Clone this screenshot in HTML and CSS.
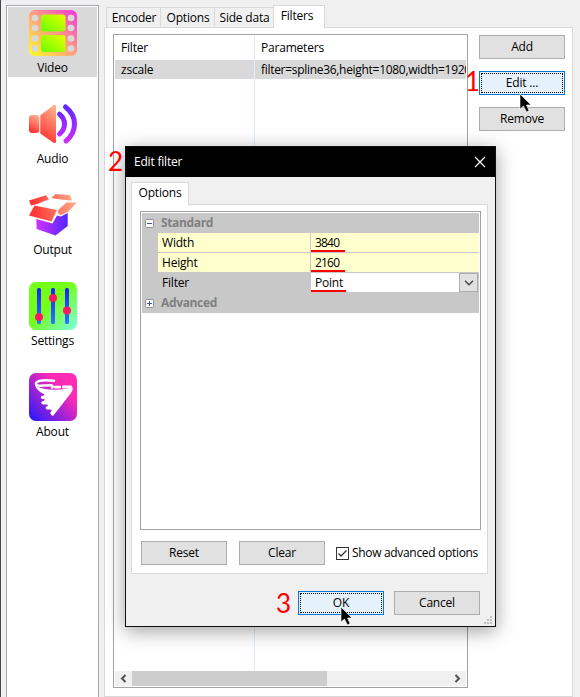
FILE: index.html
```html
<!DOCTYPE html>
<html lang="en">
<head>
<meta charset="utf-8">
<title>Edit filter</title>
<link rel="stylesheet" href="styles.css">
</head>
<body>
<div class="app">
  <nav class="sidebar">
    <div class="nav-item selected">
      <svg viewBox="0 0 48 48" width="48" height="48"><defs><linearGradient id="film" x1="0" y1="1" x2="1" y2="0"><stop stop-color="#ffff20"/><stop offset=".5" stop-color="#ffa080"/><stop offset="1" stop-color="#f535dc"/></linearGradient><linearGradient id="frame" x1="0" y1="1" x2="1" y2="0"><stop stop-color="#64ff00"/><stop offset="1" stop-color="#eaff00"/></linearGradient></defs>
        <rect y="1" width="48" height="46" rx="6" fill="url(#film)"/>
        <g fill="url(#frame)"><rect x="12" y="5.500" width="24.500" height="17" rx="3"/><rect x="12" y="26" width="24.500" height="17" rx="3"/></g>
        <g fill="#d9d9d9"><circle cx="6" cy="9" r="3.300"/><circle cx="6" cy="19" r="3.300"/><circle cx="6" cy="29.500" r="3.300"/><circle cx="6" cy="39.500" r="3.300"/><circle cx="42" cy="9" r="3.300"/><circle cx="42" cy="19" r="3.300"/><circle cx="42" cy="29.500" r="3.300"/><circle cx="42" cy="39.500" r="3.300"/></g>
      </svg>
      <span>Video</span>
    </div>
    <div class="nav-item">
      <svg viewBox="0 0 48 48" width="48" height="48"><defs><linearGradient id="horn" x1=".7" y1="0" x2=".4" y2="1"><stop stop-color="#ffb08c"/><stop offset="1" stop-color="#ff3030"/></linearGradient><linearGradient id="wave" gradientUnits="userSpaceOnUse" x1="35" y1="4" x2="35" y2="44"><stop stop-color="#5a28ff"/><stop offset="1" stop-color="#d52dff"/></linearGradient></defs>
        <rect y="15" width="10.300" height="18" rx="3" fill="url(#horn)"/>
        <path d="M11.300 15.200L24.500 5.200Q27 4 27 6.500V41.500Q27 44 24.500 42.800L11.300 33.500Z" fill="url(#horn)"/>
        <path d="M30.500 14.200Q35.500 18 35.500 24T30.500 34M36.500 7Q45.500 14 45.500 24T37 41" fill="none" stroke="url(#wave)" stroke-width="5" stroke-linecap="round"/>
      </svg>
      <span>Audio</span>
    </div>
    <div class="nav-item">
      <svg viewBox="0 0 48 48" width="48" height="48"><defs><linearGradient id="flap" gradientUnits="userSpaceOnUse" x1="0" y1="20" x2="48" y2="12"><stop offset=".1" stop-color="#ff3434"/><stop offset="1" stop-color="#ffb08c"/></linearGradient><linearGradient id="box"><stop stop-color="#cf32ff"/><stop offset="1" stop-color="#5127ff"/></linearGradient></defs>
        <path d="M7.300 28L23.500 32.500L28 24.500L32 25.500L38.700 22V35L26.500 44.500L7.700 38Z" fill="url(#box)"/>
        <g fill="url(#flap)"><path d="M0 9.500L17 4.300L20 8.300L7.500 13.200L2 14.500Z"/><path d="M22.500 7L26.500 3L41 4.300L43 9.500L36 9L25 7.500Z"/><path d="M5.500 14.500L28 19L22.500 30.500L0 24.500Z"/><path d="M37.500 11.500L48 11.500L39.500 20.500L31.500 24.300L28.500 21.500L30 18.200Z"/></g>
      </svg>
      <span>Output</span>
    </div>
    <div class="nav-item">
      <svg viewBox="0 0 48 48" width="48" height="48"><defs><linearGradient id="lime" x1="0" y1="0" x2="1" y2="1"><stop offset=".45" stop-color="#74ff18"/><stop offset="1" stop-color="#7affe0"/></linearGradient><linearGradient id="slot" x1="0" y1="0" x2="0" y2="1"><stop stop-color="#1824f0"/><stop offset="1" stop-color="#2878ff"/></linearGradient></defs>
        <rect width="48" height="48" rx="7" fill="url(#lime)"/>
        <g fill="url(#slot)"><rect x="8" y="6" width="4" height="36" rx="1.500"/><rect x="22" y="6" width="4" height="36" rx="1.500"/><rect x="36" y="6" width="4" height="36" rx="1.500"/></g>
        <g fill="#ff1768"><circle cx="10" cy="35" r="4"/><circle cx="24" cy="16" r="4"/><circle cx="38" cy="28.500" r="4"/></g>
      </svg>
      <span>Settings</span>
    </div>
    <div class="nav-item">
      <svg viewBox="0 0 48 48" width="48" height="48"><defs><linearGradient id="about" x1="0" y1="1" x2=".7" y2=".3"><stop stop-color="#2018ff"/><stop offset="1" stop-color="#ff2bb5"/></linearGradient></defs>
        <rect width="48" height="48" rx="7" fill="url(#about)"/>
        <path d="M25 7.800Q10 6 7 10Q6.500 13.500 14 12.500L22 12.200Q25 13 23 15" fill="none" stroke="#fff" stroke-width="2.400" stroke-linecap="round"/>
        <path d="M6 11Q9 15.500 20 16.500Q36 17.500 43.500 14Q44.500 17 42 20L24 43Q20 41 22 38.500Q24 37 21 36.500H18Q15.500 35 17.500 33.500Q20 33 18 31.500H14Q11 30 13 28.500Q17 27 15 26H13Q10.500 24 13 23Q17 22 14 20.500Q6.500 17 6 11Z" fill="#fff"/>
        <rect x="25" y="12.800" width="7" height="2.800" rx="1.300" fill="#fff"/><rect x="33" y="12.600" width="10" height="2.800" rx="1.300" fill="#fff"/>
      </svg>
      <span>About</span>
    </div>
  </nav>

  <main class="workspace">
    <div class="tabs">
      <div class="tab t-encoder"><span>Encoder</span></div>
      <div class="tab t-options"><span>Options</span></div>
      <div class="tab t-side"><span>Side data</span></div>
      <div class="tab t-filters active"><span>Filters</span></div>
    </div>
    <section class="page">
      <div class="list">
        <div class="list-body">
          <div class="list-row head"><span>Filter</span><span>Parameters</span></div>
          <div class="list-row current"><span>zscale</span><span class="params">filter=spline36,height=1080,width=1920</span></div>
          <div class="list-row rest"><span></span><span></span></div>
        </div>
        <div class="scrollbar">
          <svg width="17" height="15" viewBox="0 0 17 15"><path d="M10.500 4L7 7.500L10.500 11" fill="none" stroke="#505050" stroke-width="2"/></svg>
          <div class="thumb"></div>
          <svg class="right" width="17" height="15" viewBox="0 0 17 15"><path d="M6.500 4L10 7.500L6.500 11" fill="none" stroke="#505050" stroke-width="2"/></svg>
        </div>
      </div>
      <div class="actions">
        <button>Add</button>
        <button class="focus">Edit ...</button>
        <button>Remove</button>
      </div>
    </section>
  </main>
</div>

<div class="dialog">
  <header><span>Edit filter</span><svg width="12" height="12" viewBox="0 0 12 12"><path d="M1 1L11 11M11 1L1 11" stroke="#fff" stroke-width="1.200"/></svg></header>
  <div class="dialog-tabs"><div class="dialog-tab"><span>Options</span></div></div>
  <section class="dialog-page">
    <div class="grid">
      <div class="group"><svg width="9" height="9" viewBox="0 0 9 9"><rect x=".5" y=".5" width="8" height="8" rx="1" fill="#fafafa" stroke="#919191"/><path d="M2 4.500H7" stroke="#3c5aa8"/></svg><b>Standard</b></div>
      <div class="prop changed"><span>Width</span><span class="number">3840</span></div>
      <div class="prop changed"><span>Height</span><span class="number">2160</span></div>
      <div class="prop picked"><span>Filter</span><span>Point</span><i class="drop"><svg width="10" height="6" viewBox="0 0 10 6"><path d="M1 .8L5 4.800L9 .8" fill="none" stroke="#404040" stroke-width="1.300"/></svg></i></div>
      <div class="group"><svg width="9" height="9" viewBox="0 0 9 9"><rect x=".5" y=".5" width="8" height="8" rx="1" fill="#fafafa" stroke="#919191"/><path d="M2 4.500H7M4.500 2V7" stroke="#3c5aa8"/></svg><b>Advanced</b></div>
    </div>
    <div class="tools">
      <button>Reset</button>
      <button>Clear</button>
      <label><svg width="13" height="13" viewBox="0 0 13 13"><rect x=".5" y=".5" width="12" height="12" fill="#fff" stroke="#333"/><path d="M2.500 6.500L5 9L10.500 3.500" fill="none" stroke="#333" stroke-width="1.300"/></svg><span>Show advanced options</span></label>
    </div>
  </section>
  <footer><button class="focus">OK</button><button>Cancel</button></footer>
  <svg class="grip" width="8" height="8" viewBox="0 0 8 8" fill="#bfbfbf"><path d="M6 0h2v2H6zM3 3h2v2H3zM6 3h2v2H6zM0 6h2v2H0zM3 6h2v2H3zM6 6h2v2H6z"/></svg>
</div>

<span class="step one">1</span>
<span class="step two">2</span>
<span class="step three">3</span>
<i class="mark width"></i><i class="mark height"></i><i class="mark filter"></i>
<svg class="cursor edit" width="13" height="20" viewBox="0 0 13 20"><path d="M1 1V16L4.500 13L7.500 19L10 17.500L7.500 12H12Z" stroke="#fff" stroke-width=".6"/></svg>
<svg class="cursor ok" width="13" height="20" viewBox="0 0 13 20"><path d="M1 1V16L4.500 13L7.500 19L10 17.500L7.500 12H12Z" stroke="#fff" stroke-width=".6"/></svg>
</body>
</html>
```
FILE: styles.css
```css
* { box-sizing: border-box; }
body {
  margin: 0;
  width: 580px;
  height: 697px;
  overflow: hidden;
  position: relative;
  background: #f0f0f0;
  color: #000;
  font: 12px/16px "Open Sans", "Noto Sans", sans-serif;
  letter-spacing: -.2px;
}
svg { display: block; flex: none; }
span { white-space: pre; }
.app {
  display: flex;
  height: 697px;
  border-left: 1px solid #45454c;
  padding-left: 5px;
}
.sidebar {
  width: 93px;
  height: 700px;
  margin-top: 5px;
  padding: 1px;
  border: 1px solid #a7a7b0;
  background: #fff;
  display: flex;
  flex-direction: column;
  gap: 21px;
  flex: none;
}
.nav-item {
  height: 70px;
  padding-top: 2px;
  display: flex;
  flex-direction: column;
  align-items: center;
  gap: 3px;
}
.nav-item.selected { background: #d9d9d9; }
.workspace { width: 469px; margin-left: 5px; display: flex; flex-direction: column; }
.tabs { height: 27px; padding-left: 2px; display: flex; align-items: flex-end; }
.tab {
  height: 20px;
  padding: 2px 0 0 1px;
  border: 1px solid #d9d9d9;
  border-width: 1px 0 0 1px;
  display: flex;
  justify-content: center;
}
.t-encoder { width: 54px; }
.t-options { width: 54px; }
.t-side { width: 59px; }
.tab.active {
  width: 52px;
  height: 23px;
  margin-bottom: -1px;
  border-right-width: 1px;
  background: #fff;
  z-index: 1;
  padding: 2px 4px 0 0;
}
.page {
  height: 670px;
  padding: 6px 7px 8px 8px;
  border: 1px solid #d9d9d9;
  background: #fff;
  display: flex;
  gap: 11px;
}
.list { width: 355px; padding: 1px; border: 1px solid #a0a2a8; display: flex; flex-direction: column; }
.list-body { flex: 1; overflow: hidden; display: flex; flex-direction: column; }
.list-row { display: flex; height: 19px; flex: none; line-height: 19px; }
.list-row > span { width: 140px; padding-left: 6px; border-right: 1px solid #e2edf8; flex: none; }
.list-row > span + span { width: 211px; border: 0; overflow: hidden; }
.list-row.head { height: 24px; line-height: 24px; }
.list-row.current { background: #d9d9d9; }
.list-row.current .params { letter-spacing: -.3px; }
.list-row.rest { flex: 1; }
.scrollbar { height: 15px; background: #f0f0f0; display: flex; }
.thumb { width: 195px; background: #cdcdcd; }
.scrollbar .right { margin-left: auto; }
.actions { display: flex; flex-direction: column; gap: 12px; padding-top: 1px; }
button {
  width: 86px;
  height: 24px;
  margin: 0;
  padding: 0 0 1px;
  border: 1px solid #adadad;
  background: #e1e1e1;
  color: inherit;
  font: inherit;
  letter-spacing: inherit;
}
button.focus { border-color: #0078d7; background: #e5f1fb; outline: 1px dotted #000; outline-offset: -3px; }
.dialog {
  position: absolute;
  left: 125px;
  top: 146px;
  width: 371px;
  height: 481px;
  border: 1px solid #111;
  background: #f0f0f0;
  box-shadow: 0 4px 18px rgba(0,0,0,.38);
}
.dialog header {
  height: 30px;
  background: #000;
  color: #fff;
  display: flex;
  align-items: center;
  justify-content: space-between;
  padding: 0 9px 0 8px;
}
.dialog-tabs { height: 28px; padding: 5px 0 0 5px; }
.dialog-tab { width: 58px; height: 24px; border: 1px solid #d9d9d9; border-bottom: 0; background: #fff; text-align: center; line-height: 20px; position: relative; z-index: 1; }
.dialog-page { width: 357px; height: 370px; margin: -1px 0 0 5px; padding: 6px 6px 0 8px; border: 1px solid #d9d9d9; background: #fff; }
.grid { height: 319px; border: 1px solid #a0a2a8; padding: 1px; }
.group { height: 20px; background: #c8c8c8; color: #808080; display: flex; align-items: center; gap: 7px; padding-left: 3px; }
.group b { letter-spacing: -.35px; }
.prop { height: 20px; display: flex; line-height: 19px; border-left: 16px solid #c8c8c8; border-bottom: 1px solid #c8c8c8; background: #c8c8c8; }
.prop span { width: 153px; padding-left: 4px; border-right: 1px solid #c8c8c8; }
.prop span + span { flex: 1; border: 0; }
.prop .number { letter-spacing: -.8px; }
.prop.changed { background: #ffffce; }
.prop.picked span + span { background: #fff; }
.drop { width: 19px; margin-right: 1px; border: 1px solid #adadad; background: #e1e1e1; display: grid; place-items: center; }
.tools { display: flex; padding: 11px 0 0 1px; gap: 12px; }
.tools button { flex: none; }
.tools label { display: flex; align-items: center; gap: 3px; margin-left: -1px; letter-spacing: -.32px; }
.dialog footer { display: flex; justify-content: flex-end; gap: 10px; padding: 17px 15px 0 0; }
.grip { position: absolute; right: 3px; bottom: 2px; }
.step { position: absolute; color: #f00; font: 26px/26px Lato, "Open Sans", sans-serif; }
.one { left: 465px; top: 68px; }
.two { left: 108px; top: 148px; }
.three { left: 276px; top: 590px; }
.mark { position: absolute; left: 311px; width: 34px; height: 2px; background: #f00; }
.mark.width { top: 250px; }
.mark.height { top: 270px; }
.mark.filter { top: 290px; width: 35px; }
.cursor { position: absolute; }
.cursor.edit { left: 519px; top: 93px; }
.cursor.ok { left: 340px; top: 606px; }
```
